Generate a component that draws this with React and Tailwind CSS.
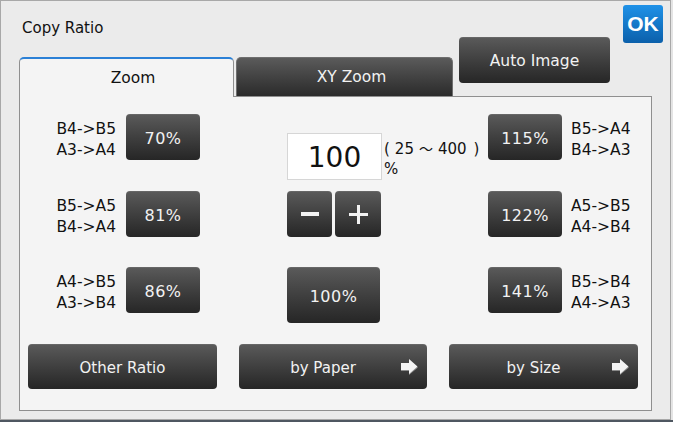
import React from "react";

const Btn = ({ className = "", children }) => (
  <div
    className={`flex items-center justify-center rounded-[4px] bg-linear-to-b from-[#5b5b5b] to-[#262626] text-[#f2f2f2] shadow-[inset_0_1px_0_rgba(255,255,255,0.08)] ${className}`}
  >
    {children}
  </div>
);

const Arrow = () => (
  <svg width="17" height="16" viewBox="0 0 17 16" className="mr-[9px] shrink-0">
    <polygon points="0,5 8,5 8,1 17,8.5 8,16 8,12 0,12" fill="#8a8a8a" />
    <polygon points="0,4 8,4 8,0 16.5,7.5 8,15 8,11 0,11" fill="#f4f4f4" />
  </svg>
);

const Label = ({ a, b }) => (
  <div className="text-[15.5px] leading-[21px] text-[#111] pt-[5px]">
    {a}
    <br />
    {b}
  </div>
);

export default function App() {
  return (
    <div className="w-[673px] h-[422px] bg-[#e4e4e4] overflow-hidden font-['DejaVu_Sans','Noto_Sans_CJK_JP',sans-serif]">
      <div className="w-[671px] h-[420px] border border-[#a8a8a8] bg-[#ebebeb] flex flex-col">
        {/* top section */}
        <div className="flex items-start h-[95px] shrink-0">
          <div className="ml-[18px] flex flex-col">
            <div className="h-[56px] pl-[3px] pt-[17px] text-[15px] leading-[20px] text-[#111]">
              Copy Ratio
            </div>
            <div className="flex items-start h-[39px]">
              <div className="relative z-10 w-[215px] h-[40px] bg-[#f4f4f4] border-x border-x-[#8f8f8f] border-t-2 border-t-[#2b80d6] rounded-t-[5px] flex items-center justify-center pl-[13px] pt-[2px] text-[15.5px] text-[#111]">
                Zoom
              </div>
              <div className="ml-[2px] w-[217px] h-[39px] rounded-t-[5px] bg-linear-to-b from-[#5b5b5b] to-[#2b2b2b] border border-b-0 border-[#6e6e6e] flex items-center justify-center pl-[14px] pt-[2px] text-[15.5px] text-[#f2f2f2]">
                XY Zoom
              </div>
            </div>
          </div>
          <Btn className="ml-[6px] mt-[36px] w-[151px] h-[46px] text-[15.5px] pt-[4px]">Auto Image</Btn>
          <div className="ml-[13px] mt-[4px] w-[40px] h-[38px] rounded-[3px] bg-linear-to-b from-[#1f92e8] to-[#0b60ab] flex items-center justify-center text-white font-bold text-[21px] font-['Liberation_Sans',sans-serif]">
            OK
          </div>
        </div>

        {/* panel */}
        <div className="ml-[18px] w-[633px] h-[315px] border border-[#8f8f8f] bg-[#f4f4f4] flex flex-col">
          <div className="flex pt-[17px]">
            {/* left column */}
            <div className="w-[180px] flex flex-col">
              <div className="flex items-center justify-end h-[46px]">
                <Label a="B4->B5" b="A3->A4" />
                <Btn className="ml-[10px] w-[74px] h-[46px] text-[16px] tracking-[0.5px] pt-[3px]">70%</Btn>
              </div>
              <div className="mt-[31px] flex items-center justify-end h-[46px]">
                <Label a="B5->A5" b="B4->A4" />
                <Btn className="ml-[10px] w-[74px] h-[46px] text-[16px] tracking-[0.5px] pt-[3px]">81%</Btn>
              </div>
              <div className="mt-[30px] flex items-center justify-end h-[46px]">
                <Label a="A4->B5" b="A3->B4" />
                <Btn className="ml-[10px] w-[74px] h-[46px] text-[16px] tracking-[0.5px] pt-[3px]">86%</Btn>
              </div>
            </div>

            {/* center column */}
            <div className="ml-[87px] w-[201px] flex flex-col">
              <div className="mt-[19px] flex">
                <div className="w-[95px] h-[47px] bg-white border border-[#d6d6d6] flex items-center justify-center pt-[2px] text-[28px] text-[#111]">
                  100
                </div>
                <div className="ml-[2px] pt-[6px] text-[15px] leading-[20px] text-[#111] whitespace-nowrap">
                  <span>(</span>
                  <span className="ml-[5px]">25</span>
                  <span className="inline-block w-[24px] text-center text-[14px]">～</span>
                  <span>400</span>
                  <span className="ml-[7px]">)</span>
                  <br />
                  %
                </div>
              </div>
              <div className="mt-[11px] flex gap-[3px]">
                <Btn className="w-[45px] h-[46px]">
                  <span className="block w-[18px] h-[4px] bg-[#f2f2f2]" />
                </Btn>
                <Btn className="w-[46px] h-[46px] relative">
                  <span className="block w-[19px] h-[3px] bg-[#f2f2f2]" />
                  <span className="absolute w-[3px] h-[19px] bg-[#f2f2f2]" />
                </Btn>
              </div>
              <Btn className="mt-[30px] w-[93px] h-[56px] text-[16px] tracking-[0.5px] pt-[3px]">100%</Btn>
            </div>

            {/* right column */}
            <div className="flex flex-col">
              <div className="flex items-center h-[46px]">
                <Btn className="w-[74px] h-[46px] text-[16px] tracking-[0.5px] pt-[3px]">115%</Btn>
                <div className="ml-[9px]">
                  <Label a="B5->A4" b="B4->A3" />
                </div>
              </div>
              <div className="mt-[31px] flex items-center h-[46px]">
                <Btn className="w-[74px] h-[46px] text-[16px] tracking-[0.5px] pt-[3px]">122%</Btn>
                <div className="ml-[9px]">
                  <Label a="A5->B5" b="A4->B4" />
                </div>
              </div>
              <div className="mt-[30px] flex items-center h-[46px]">
                <Btn className="w-[74px] h-[46px] text-[16px] tracking-[0.5px] pt-[3px]">141%</Btn>
                <div className="ml-[9px]">
                  <Label a="B5->B4" b="A4->A3" />
                </div>
              </div>
            </div>
          </div>

          {/* bottom row */}
          <div className="mt-[21px] ml-[8px] flex gap-[22px]">
            <Btn className="w-[189px] h-[45px] text-[15px] pt-[4px]">Other Ratio</Btn>
            <Btn className="w-[188px] h-[45px] text-[15px]">
              <span className="flex-1 text-center pl-[6px] pt-[4px]">by Paper</span>
              <Arrow />
            </Btn>
            <Btn className="w-[189px] h-[45px] text-[15px]">
              <span className="flex-1 text-center pl-[6px] pt-[4px]">by Size</span>
              <Arrow />
            </Btn>
          </div>
        </div>
      </div>
      <div className="h-[2px] bg-[#4f5761]" />
    </div>
  );
}
